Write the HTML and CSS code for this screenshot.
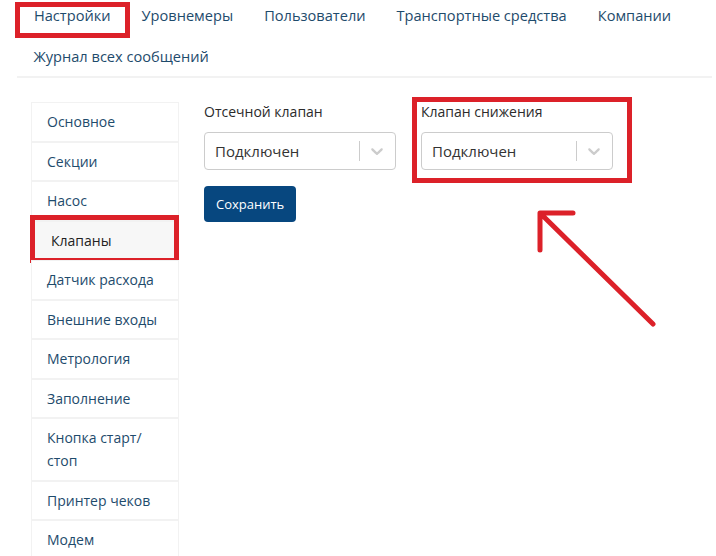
FILE: index.html
```html
<!DOCTYPE html>
<html lang="ru">
<head>
<meta charset="utf-8">
<title>Настройки</title>
<link rel="stylesheet" href="styles.css">
</head>
<body>
<header class="topnav">
  <nav class="tabs">
    <a class="tab tab-marked">Настройки<span class="mark mark-tab"></span></a>
    <a class="tab">Уровнемеры</a>
    <a class="tab">Пользователи</a>
    <a class="tab">Транспортные средства</a>
    <a class="tab">Компании</a>
    <a class="tab">Журнал всех сообщений</a>
  </nav>
</header>
<div class="layout">
  <aside class="side">
    <a class="side-item">Основное</a>
    <a class="side-item">Секции</a>
    <a class="side-item">Насос</a>
    <a class="side-item side-active">Клапаны<span class="mark mark-item"></span></a>
    <a class="side-item">Датчик расхода</a>
    <a class="side-item">Внешние входы</a>
    <a class="side-item">Метрология</a>
    <a class="side-item">Заполнение</a>
    <a class="side-item">Кнопка старт/<br>стоп</a>
    <a class="side-item">Принтер чеков</a>
    <a class="side-item">Модем</a>
  </aside>
  <main class="content">
    <div class="fields">
      <div class="field">
        <div class="label">Отсечной клапан</div>
        <div class="select">
          <div class="select-value">Подключен</div>
          <span class="select-sep"></span>
          <span class="select-ind"><svg viewBox="0 0 20 20" width="20" height="20"><path d="M4.516 7.548c0.436-0.446 1.043-0.481 1.576 0l3.908 3.747 3.908-3.747c0.533-0.481 1.141-0.446 1.574 0 0.436 0.445 0.408 1.197 0 1.615-0.406 0.418-4.695 4.502-4.695 4.502-0.217 0.223-0.502 0.335-0.787 0.335s-0.57-0.112-0.789-0.335c0 0-4.287-4.084-4.695-4.502s-0.436-1.170 0-1.615z"/></svg></span>
        </div>
      </div>
      <div class="field field-marked">
        <div class="label">Клапан снижения</div>
        <div class="select">
          <div class="select-value">Подключен</div>
          <span class="select-sep"></span>
          <span class="select-ind"><svg viewBox="0 0 20 20" width="20" height="20"><path d="M4.516 7.548c0.436-0.446 1.043-0.481 1.576 0l3.908 3.747 3.908-3.747c0.533-0.481 1.141-0.446 1.574 0 0.436 0.445 0.408 1.197 0 1.615-0.406 0.418-4.695 4.502-4.695 4.502-0.217 0.223-0.502 0.335-0.787 0.335s-0.57-0.112-0.789-0.335c0 0-4.287-4.084-4.695-4.502s-0.436-1.170 0-1.615z"/></svg></span>
        </div>
        <span class="mark mark-field"></span>
      </div>
    </div>
    <button class="save" type="button">Сохранить</button>
  </main>
</div>
<svg class="arrow" viewBox="0 0 716 556" width="716" height="556">
  <path d="M653 324 L541 214 M540 250 L540 213 L573 213" fill="none" stroke="#dc2129" stroke-width="5" stroke-linecap="round" stroke-linejoin="round"/>
</svg>
</body>
</html>
```
FILE: styles.css
```css
html, body {
  margin: 0;
  padding: 0;
  background: #ffffff;
}
body {
  font-family: "Open Sans", "Noto Sans", sans-serif;
  color: #333333;
  position: relative;
  width: 716px;
  height: 556px;
  overflow: hidden;
}
.topnav {
  margin: 0 4px 0 17px;
  border-bottom: 2px solid #f2f2f2;
}
.tabs {
  display: flex;
  flex-wrap: wrap;
  row-gap: 20px;
  padding: 5px 0 9px 1px;
}
.tab {
  position: relative;
  padding: 0 15.5px;
  font-size: 14.6px;
  line-height: 21px;
  color: #1e4b6c;
  text-decoration: none;
  white-space: nowrap;
}
.tab:first-child {
  padding-left: 16px;
}
.mark {
  position: absolute;
  border: 5px solid #dc2129;
  pointer-events: none;
}
.mark-tab {
  left: -3px;
  right: -4px;
  top: -3px;
  bottom: -12px;
}
.layout {
  display: flex;
  align-items: flex-start;
  padding: 24px 0 0 31px;
  gap: 25px;
}
.side {
  width: 148px;
  display: flex;
  flex-direction: column;
}
.side-item {
  position: relative;
  display: block;
  border: 1px solid #f2f2f2;
  padding: 7.25px 10px 7.25px 15px;
  font-size: 14px;
  line-height: 23px;
  color: #1e4b6c;
  background: #ffffff;
}
.side-active {
  background: #f7f7f7;
  color: #222222;
  padding-left: 19px;
}
.mark-item {
  left: -2px;
  right: -1px;
  top: -7px;
  bottom: -4px;
}
.content {
  display: flex;
  flex-direction: column;
  align-items: flex-start;
}
.fields {
  display: flex;
  gap: 25px;
}
.field {
  position: relative;
  width: 192px;
}
.mark-field {
  left: -9px;
  right: -19px;
  top: -5px;
  bottom: -13px;
}
.label {
  font-size: 14px;
  line-height: 20px;
  color: #2b2b2b;
  margin-bottom: 10px;
}
.select {
  box-sizing: border-box;
  height: 38px;
  border: 1px solid #cccccc;
  border-radius: 4px;
  display: flex;
  align-items: center;
  background: #ffffff;
}
.select-value {
  flex: 1;
  padding: 0 10px;
  font-size: 15px;
  color: #333333;
}
.select-sep {
  align-self: stretch;
  width: 1px;
  margin: 8px 0;
  background: #cccccc;
}
.select-ind {
  display: flex;
  padding: 0 8px 0 7px;
  fill: #cccccc;
}
.save {
  margin-top: 16px;
  height: 36px;
  padding: 0 12px;
  border: 0;
  border-radius: 4px;
  background: #07477f;
  color: #ffffff;
  font-family: "Open Sans", "Noto Sans", sans-serif;
  font-size: 13px;
}
.arrow {
  position: absolute;
  left: 0;
  top: 0;
  pointer-events: none;
}
```
